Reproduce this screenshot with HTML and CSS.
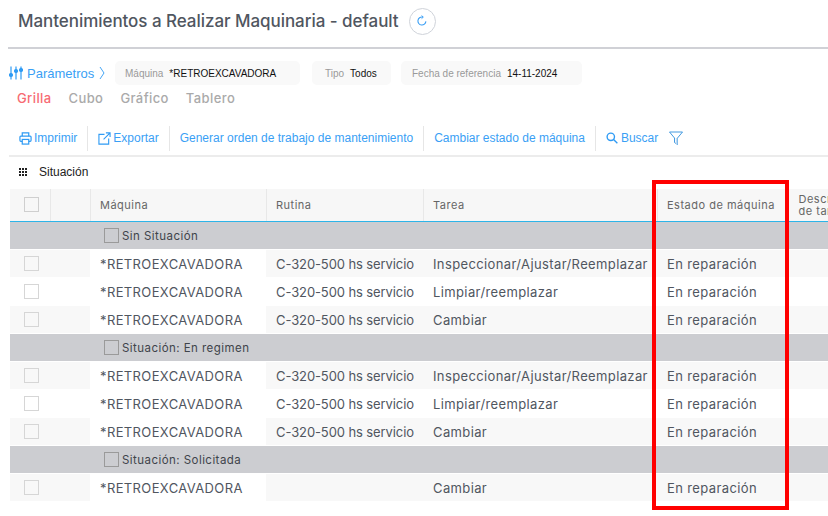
FILE: index.html
```html
<!DOCTYPE html>
<html lang="es">
<head>
<meta charset="utf-8">
<title>Mantenimientos a Realizar Maquinaria</title>
<link rel="stylesheet" href="styles.css">
</head>
<body>
<div class="page">
  <header class="title-bar">
    <h1 class="title">Mantenimientos a Realizar Maquinaria - default</h1>
    <button class="refresh" type="button" aria-label="Actualizar">
      <svg viewBox="0 0 12 12" width="12" height="12" fill="none" stroke="#3a9ff5" stroke-width="1.1"><path d="M9.9 6.4A4 4 0 1 1 6.6 2.1"/><path d="M5.6 0.6 7.3 2.1 5.6 3.6" stroke-width="1"/></svg>
    </button>
  </header>

  <section class="params">
    <span class="params-link">
      <svg viewBox="0 0 14 14" width="14" height="14" fill="none" stroke="#2f9bf4" stroke-width="1.2"><path d="M2 0.5V13.5M7 0.5V13.5M12 0.5V13.5"/><circle cx="2" cy="9" r="1.5" fill="#2f9bf4"/><circle cx="7" cy="5" r="1.5" fill="#2f9bf4"/><circle cx="12" cy="4" r="1.5" fill="#2f9bf4"/></svg>
      <span>Parámetros</span>
      <svg class="chev" viewBox="0 0 6 14" width="6" height="14" fill="none" stroke="#2f9bf4" stroke-width="0.9"><path d="M1 1 5 7 1 13"/></svg>
    </span>
    <span class="chip chip-maquina"><span class="chip-label">Máquina</span><span class="chip-value">*RETROEXCAVADORA</span></span>
    <span class="chip chip-tipo"><span class="chip-label">Tipo</span><span class="chip-value">Todos</span></span>
    <span class="chip chip-fecha"><span class="chip-label">Fecha de referencia</span><span class="chip-value">14-11-2024</span></span>
  </section>

  <nav class="tabs">
    <span class="tab tab-active">Grilla</span>
    <span class="tab">Cubo</span>
    <span class="tab">Gráfico</span>
    <span class="tab">Tablero</span>
  </nav>

  <div class="toolbar">
    <span class="tool tool-first">
      <svg viewBox="0 0 14 14" width="13" height="13" fill="none" stroke="#2f9bf4" stroke-width="1.3"><path d="M3.5 4.5V1H10.500V4.500"/><rect x="1" y="4.500" width="12" height="5.500" rx="1"/><rect x="3.500" y="8" width="7" height="5" fill="#fff"/></svg>
      Imprimir
    </span>
    <span class="tool">
      <svg viewBox="0 0 14 14" width="13" height="13" fill="none" stroke="#2f9bf4" stroke-width="1.2"><path d="M7 2.500H1V13H11.500V7"/><path d="M6 8 13 1M8.500 1H13V5.500"/></svg>
      Exportar
    </span>
    <span class="tool">Generar orden de trabajo de mantenimiento</span>
    <span class="tool">Cambiar estado de máquina</span>
    <span class="tool tool-plain">
      <svg viewBox="0 0 13 13" width="12" height="12" fill="none" stroke="#2f9bf4" stroke-width="1.5"><circle cx="5.200" cy="5.200" r="4"/><path d="M8.200 8.200 12.300 12.300"/></svg>
      Buscar
    </span>
    <svg class="funnel" viewBox="0 0 14 14" width="14" height="14" fill="none" stroke="#2f8fdc" stroke-width="0.9"><path d="M0.500 1H13.500L8.500 7V13.500L5.500 11.500V7Z"/><path d="M8.500 7V13.500L6.800 12.400V7Z" fill="#bcd9f2" stroke="none"/></svg>
  </div>

  <div class="grouping">
    <svg viewBox="0 0 8 8" width="8" height="8" fill="#222"><rect x="0" y="0" width="2" height="2"/><rect x="3" y="0" width="2" height="2"/><rect x="6" y="0" width="2" height="2"/><rect x="0" y="3" width="2" height="2"/><rect x="3" y="3" width="2" height="2"/><rect x="6" y="3" width="2" height="2"/><rect x="0" y="6" width="2" height="2"/><rect x="3" y="6" width="2" height="2"/><rect x="6" y="6" width="2" height="2"/></svg>
    <span>Situación</span>
  </div>

  <div class="table-wrap">
    <table class="grid">
      <colgroup>
        <col class="c-check"><col class="c-blank"><col class="c-maq"><col class="c-rut"><col class="c-tar"><col class="c-est"><col class="c-desc">
      </colgroup>
      <thead>
        <tr>
          <th class="cell-check"><span class="box box-head"></span></th>
          <th></th>
          <th>Máquina</th>
          <th>Rutina</th>
          <th>Tarea</th>
          <th>Estado de máquina</th>
          <th class="th-wrap">Descripción<br>de tarea</th>
        </tr>
      </thead>
      <tbody>
        <tr class="group"><td></td><td colspan="6"><div class="group-label"><span class="box box-group"></span>Sin Situación</div></td></tr>
        <tr class="odd"><td class="cell-check"><span class="box"></span></td><td></td><td class="white">*RETROEXCAVADORA</td><td class="rutina">C-320-500 hs servicio</td><td>Inspeccionar/Ajustar/Reemplazar</td><td>En reparación</td><td></td></tr>
        <tr><td class="cell-check"><span class="box"></span></td><td></td><td class="white">*RETROEXCAVADORA</td><td class="rutina">C-320-500 hs servicio</td><td>Limpiar/reemplazar</td><td>En reparación</td><td></td></tr>
        <tr class="odd"><td class="cell-check"><span class="box"></span></td><td></td><td class="white">*RETROEXCAVADORA</td><td class="rutina">C-320-500 hs servicio</td><td>Cambiar</td><td>En reparación</td><td></td></tr>
        <tr class="group"><td></td><td colspan="6"><div class="group-label"><span class="box box-group"></span>Situación: En regimen</div></td></tr>
        <tr class="odd"><td class="cell-check"><span class="box"></span></td><td></td><td class="white">*RETROEXCAVADORA</td><td class="rutina">C-320-500 hs servicio</td><td>Inspeccionar/Ajustar/Reemplazar</td><td>En reparación</td><td></td></tr>
        <tr><td class="cell-check"><span class="box"></span></td><td></td><td class="white">*RETROEXCAVADORA</td><td class="rutina">C-320-500 hs servicio</td><td>Limpiar/reemplazar</td><td>En reparación</td><td></td></tr>
        <tr class="odd"><td class="cell-check"><span class="box"></span></td><td></td><td class="white">*RETROEXCAVADORA</td><td class="rutina">C-320-500 hs servicio</td><td>Cambiar</td><td>En reparación</td><td></td></tr>
        <tr class="group"><td></td><td colspan="6"><div class="group-label"><span class="box box-group"></span>Situación: Solicitada</div></td></tr>
        <tr class="odd"><td class="cell-check"><span class="box"></span></td><td></td><td class="white">*RETROEXCAVADORA</td><td></td><td>Cambiar</td><td>En reparación</td><td></td></tr>
      </tbody>
    </table>
  </div>

  <div class="highlight"></div>
</div>
</body>
</html>
```

FILE: styles.css
```css
* { box-sizing: border-box; }
html, body { margin: 0; padding: 0; background: #fff; }
body { width: 828px; height: 516px; overflow: hidden; font-family: "Inter", "Liberation Sans", sans-serif; }
.page { position: relative; width: 828px; height: 516px; overflow: hidden; padding-left: 8px; }

.title-bar { height: 49px; border-bottom: 2px solid #d0d1d6; display: flex; align-items: center; padding: 0 0 5px 10px; }
.title { margin: 0; font-size: 17px; font-weight: 500; color: #50565f; letter-spacing: -0.05px; line-height: 22px; }
.refresh { width: 27px; height: 27px; margin-left: 10px; border: 1px solid #cfd3da; border-radius: 50%; background: #fff; padding: 0; display: flex; align-items: center; justify-content: center; }

.params { display: flex; align-items: center; height: 24px; margin-top: 12px; font-family: "Liberation Sans", sans-serif; }
.params-link { display: flex; align-items: center; width: 107px; padding-left: 1px; color: #3a9ff5; font-size: 13px; }
.params-link span { margin-left: 4px; }
.params-link .chev { margin-left: 5px; }
.chip { display: flex; align-items: center; height: 24px; background: #f9f9f9; border-radius: 5px; font-size: 10px; padding-left: 10px; }
.chip-label { color: #9a9a9a; margin-right: 6px; }
.chip-value { color: #111; }
.chip-maquina { width: 185px; margin-right: 12px; }
.chip-tipo { width: 79px; padding-left: 13px; margin-right: 10px; }
.chip-fecha { width: 181px; padding-left: 11px; }

.tabs { display: flex; height: 18px; margin-top: 4px; padding-left: 9px; gap: 17px; font-size: 13px; line-height: 18px; font-weight: 500; }
.tab { color: #aaa; letter-spacing: 0.4px; }
.tab-active { color: #f76a73; }

.toolbar { display: flex; align-items: center; height: 36px; margin-top: 14px; padding-top: 2px; margin-left: 1px; border-bottom: 2px solid #ececec; font-family: "Liberation Sans", sans-serif; font-size: 12px; color: #3a9ff5; padding-bottom: 2px; }
.tool { display: flex; align-items: center; gap: 2px; height: 25px; padding: 0 10px; border-left: 1px solid #e6e6e6; }
.tool-first { border-left: 0; }
.tool-plain { gap: 3px; }
.funnel { margin-left: 1px; }

.grouping { display: flex; align-items: center; height: 32px; padding: 0 0 3px 11px; gap: 12px; font-family: "Liberation Sans", sans-serif; font-size: 12px; color: #222; }

.table-wrap { width: 820px; overflow: hidden; padding-left: 2px; }
.grid { table-layout: fixed; border-collapse: collapse; width: 868px; font-size: 13px; color: #50565f; }
.c-check { width: 40px; } .c-blank { width: 40px; } .c-maq { width: 176px; } .c-rut { width: 157px; } .c-tar { width: 234px; } .c-est { width: 131px; } .c-desc { width: 90px; }
.grid th { height: 32px; padding: 0 10px 0 9.500px; background: #f7f7f7; border-right: 1px solid #e8e8e8; border-bottom: 1px solid #2db4e8; font-size: 11px; font-weight: 400; color: #666; text-align: left; letter-spacing: 0.5px; white-space: nowrap; }
.grid th.th-wrap { font-size: 11px; line-height: 12px; padding-left: 10px; }
.grid td { height: 28px; padding: 1px 10px 0; border-bottom: 1px solid #fff; white-space: nowrap; letter-spacing: 0.38px; }
.grid td.rutina { letter-spacing: -0.1px; }
.grid .odd td { background: #f8f8f8; }
.grid .odd td.white { background: #fff; }
.grid td.cell-check, .grid th.cell-check { padding: 0 0 0 14px; }
.grid .group td { background: #cccdd1; color: #3f444b; font-size: 11.500px; padding: 1px 0 0; letter-spacing: 0.45px; }
.group-label { display: flex; align-items: center; gap: 3px; margin-left: 54px; }

.box { display: block; width: 15px; height: 15px; border: 1px solid #d6d6d6; background: transparent; }
.box-head { border-color: #cfcfcf; }
.box-group { border-color: #9a9a9a; }

.highlight { position: absolute; left: 652px; top: 180px; width: 137px; height: 330px; border: 4px solid #f00; }
```
